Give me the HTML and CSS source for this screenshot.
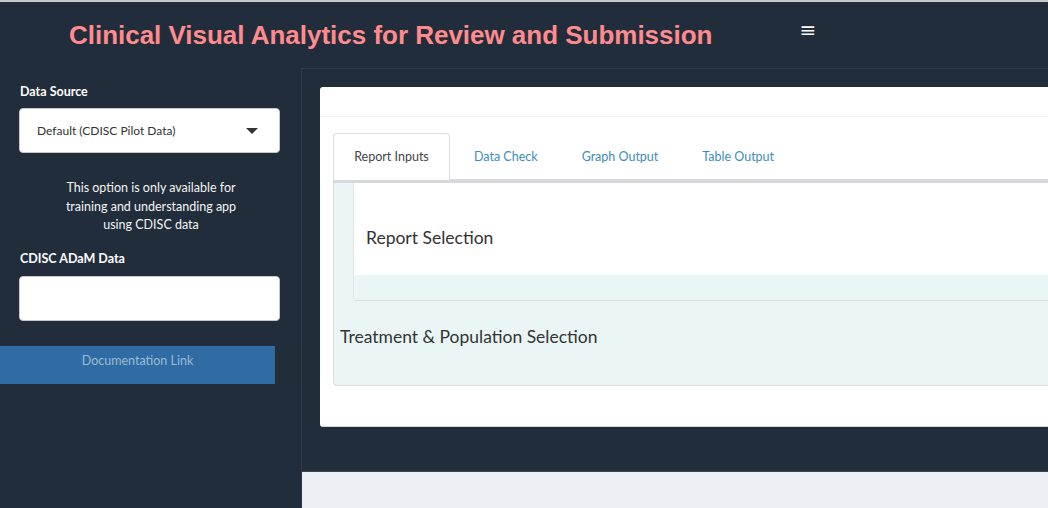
FILE: index.html
```html
<!DOCTYPE html>
<html>
<head>
<meta charset="utf-8">
<link rel="stylesheet" href="styles.css">
</head>
<body>
<div class="topstrip"></div>
<header class="header">
  <h1 class="title">Clinical Visual Analytics for Review and Submission</h1>
  <span class="burger">≡</span>
</header>
<div class="layout">
  <aside class="sidebar">
    <label class="label">Data Source</label>
    <div class="select">
      <span>Default (CDISC Pilot Data)</span>
      <span class="caret"></span>
    </div>
    <p class="help">This option is only available for<br>training and understanding app<br>using CDISC data</p>
    <label class="label">CDISC ADaM Data</label>
    <div class="input"></div>
    <div class="doc">Documentation Link</div>
  </aside>
  <main class="main">
    <div class="content">
      <div class="box">
        <div class="box-header"></div>
        <div class="box-body">
          <ul class="tabs">
            <li class="tab active">Report Inputs</li>
            <li class="tab">Data Check</li>
            <li class="tab">Graph Output</li>
            <li class="tab">Table Output</li>
          </ul>
          <div class="tabpane">
            <div class="panel">
              <div class="panel-top">Report Selection</div>
              <div class="panel-foot"></div>
            </div>
            <div class="section-title">Treatment &amp; Population Selection</div>
          </div>
        </div>
      </div>
    </div>
    <div class="footer"></div>
  </main>
</div>
</body>
</html>
```
FILE: styles.css
```css
html, body {
  margin: 0;
  padding: 0;
  height: 508px;
  overflow: hidden;
  background: #222d3b;
  font-family: "Source Sans Pro", Lato, "Open Sans", sans-serif;
}
.topstrip {
  height: 2px;
  background: #c9c9c9;
}
.header {
  height: 66px;
  display: flex;
  align-items: flex-start;
  background: #222d3b;
}
.title {
  margin: 18px 0 0 69px;
  font-family: "Liberation Sans", Arial, sans-serif;
  font-weight: bold;
  font-size: 26px;
  letter-spacing: -0.02px;
  color: #ff8b8e;
  white-space: nowrap;
}
.burger {
  margin: 13px 0 0 87px;
  color: #ffffff;
  font-family: "DejaVu Sans", sans-serif;
  font-size: 20px;
  line-height: 30px;
}
.layout {
  display: flex;
  height: 440px;
}
.sidebar {
  width: 300px;
  flex: none;
  box-sizing: border-box;
  padding-top: 16px;
  color: #ffffff;
}
.label {
  display: block;
  margin-left: 20px;
  font-size: 12.5px;
  font-weight: bold;
  line-height: 16px;
}
.select {
  margin: 8px 20px 0 19px;
  height: 45px;
  box-sizing: border-box;
  background: #fff;
  border: 1px solid #c8c8c8;
  border-radius: 4px;
  display: flex;
  align-items: center;
  justify-content: space-between;
  padding: 0 21px 0 17px;
  color: #333;
  font-size: 12px;
}
.caret {
  width: 0;
  height: 0;
  border-left: 6px solid transparent;
  border-right: 6px solid transparent;
  border-top: 6px solid #333;
}
.help {
  margin: 26px 0 16px 0;
  padding-left: 2px;
  text-align: center;
  font-size: 12.5px;
  line-height: 18.5px;
  color: #f4f4f4;
}
.input {
  margin: 9px 20px 0 19px;
  height: 45px;
  box-sizing: border-box;
  background: #fff;
  border: 1px solid #c8c8c8;
  border-radius: 4px;
}
.doc {
  margin-top: 25px;
  width: 275px;
  height: 38px;
  background: #2e6ca3;
  color: #9fbad4;
  font-size: 12.5px;
  line-height: 30px;
  text-align: center;
}
.main {
  flex: 1;
  display: flex;
  flex-direction: column;
  border-left: 1px solid #2f3b4a;
  margin-left: 1px;
  overflow: hidden;
}
.content {
  border-top: 1px solid #2f3b4a;
  padding: 18px 0 0 18px;
  height: 403px;
  flex: none;
  box-sizing: border-box;
}
.box {
  width: 900px;
  height: 340px;
  background: #fff;
  border-radius: 3px;
  box-sizing: border-box;
  border-bottom: 1px solid #d2d6de;
}
.box-header {
  height: 29px;
  border-bottom: 1px solid #f0f0f0;
}
.box-body {
  padding: 16px 0 0 13px;
}
.tabs {
  list-style: none;
  margin: 0;
  padding: 0;
  display: flex;
  height: 46px;
  border-bottom: 4px solid #d6d8de;
  box-sizing: content-box;
}
.tab {
  height: 46px;
  box-sizing: border-box;
  padding: 0 19px 1px 23px;
  display: flex;
  align-items: center;
  font-size: 12.5px;
  color: #3c8dbc;
  white-space: nowrap;
  border: 1px solid transparent;
  border-bottom: none;
  border-radius: 4px 4px 0 0;
}
.tab.active {
  color: #444;
  border-color: #dddddd;
  padding: 0 0 1px 0;
  background: #fff;
  height: 47px;
  margin-bottom: -1px;
  width: 117px;
  justify-content: center;
}
.tabpane {
  height: 203px;
  box-sizing: border-box;
  background: #eaf6f6;
  border: 1px solid #dcdcdc;
  border-top: none;
  border-radius: 0 0 4px 4px;
  padding-left: 19px;
}
.panel {
  background: #fff;
  border-bottom: 1px solid #dcdcdc;
  border-left: 1px solid #e4e4e4;
  border-radius: 0 0 0 4px;
}
.panel-top {
  height: 92px;
  box-sizing: border-box;
  padding: 45px 0 0 12px;
  font-size: 17.5px;
  color: #333;
  line-height: 20px;
}
.panel-foot {
  height: 25px;
  background: #eaf6f6;
}
.section-title {
  margin: 26px 0 0 -13px;
  font-size: 17.5px;
  color: #333;
  line-height: 20px;
}
.footer {
  flex: 1;
  background: #ecf0f5;
  border-top: 1px solid #3a4656;
}
```
